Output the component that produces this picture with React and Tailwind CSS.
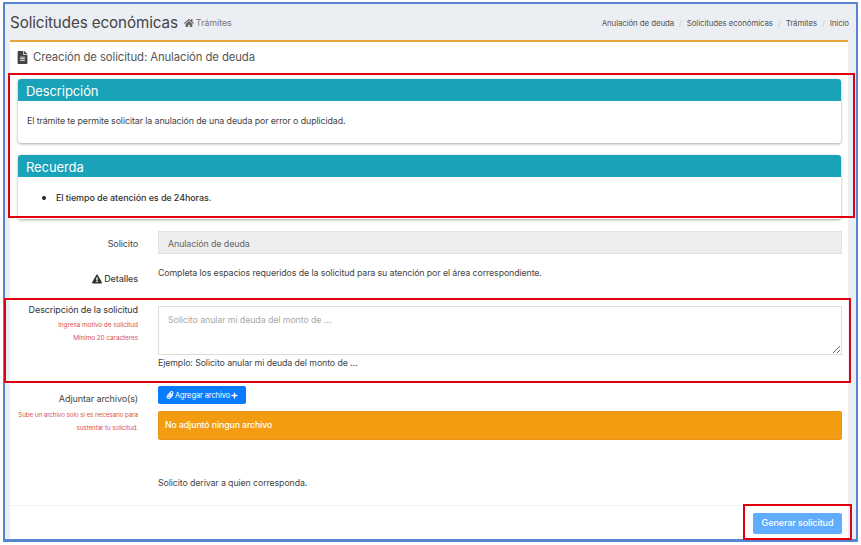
import { FaFileAlt, FaHome, FaExclamationTriangle, FaPaperclip, FaPlus } from "react-icons/fa";

const Panel = ({ title, className, children }) => (
  <div className={`rounded-[3px] bg-white shadow-[0_1px_3px_rgba(0,0,0,0.35)] ${className}`}>
    <div className="flex h-[22px] items-center rounded-t-[3px] bg-[#19a2b8] pl-2 pt-[3px] text-[13px] text-white">{title}</div>
    {children}
  </div>
);

export default function App() {
  return (
    <div className="relative h-[545px] w-[861px] bg-white pl-[3px] pt-[2px] font-['Inter',sans-serif] tracking-[-0.1px] text-[#444]">
      <div className="flex h-[540px] w-[855px] flex-col border-2 border-b-[3px] border-[#5585d2] bg-[#ebeef3]">
        {/* page title */}
        <div className="flex h-[36px] shrink-0 items-center justify-between pl-[5px] pr-[7px] pt-[3px]">
          <div className="flex items-baseline gap-[6px]">
            <span className="text-[15.2px] text-[#444]">Solicitudes económicas</span>
            <span className="flex items-center gap-[2px] text-[9px] text-[#777]">
              <FaHome className="h-[10px] w-[10px] text-[#666]" />
              Trámites
            </span>
          </div>
          <div className="flex gap-[5px] text-[7.9px] text-[#555]">
            <span>Anulación de deuda</span>
            <span className="text-[#ccc]">/</span>
            <span>Solicitudes económicas</span>
            <span className="text-[#ccc]">/</span>
            <span>Trámites</span>
            <span className="text-[#ccc]">/</span>
            <span>Inicio</span>
          </div>
        </div>

        {/* main card */}
        <div className="ml-[5px] flex w-[838px] flex-1 flex-col border-t-2 border-[#e5a33a] bg-white">
          <div className="flex h-[30px] shrink-0 items-center gap-[5px] pl-[7px] pt-[1px] text-[11.35px] text-[#555]">
            <FaFileAlt className="h-[13px] w-[11px] text-[#444]" />
            Creación de solicitud: Anulación de deuda
          </div>

          <div className="flex flex-col pl-2 pr-[7px] pt-[7px]">
            <Panel title="Descripción" className="h-[64px]">
              <p className="pl-[9px] pt-[13px] text-[8.85px] text-[#444]">
                El trámite te permite solicitar la anulación de una deuda por error o duplicidad.
              </p>
            </Panel>
            <Panel title="Recuerda" className="mt-3 h-[64px]">
              <div className="flex items-center pl-[24px] pt-[14px] text-[9px] font-medium text-[#333]">
                <span className="mr-[10px] h-[4px] w-[4px] rounded-full bg-[#222]" />
                El tiempo de atención es de 24horas.
              </div>
            </Panel>
          </div>

          <div className="mt-[12px] flex pr-[6px]">
            <div className="flex w-[128px] shrink-0 items-center justify-end pt-[3px] text-[9px] text-[#444]">Solicito</div>
            <div className="ml-[20px] flex h-[23px] flex-1 items-center border border-[#e2e2e2] bg-[#eeeeee] pl-[9px] pt-[3px] text-[8.9px] text-[#666]">
              Anulación de deuda
            </div>
          </div>

          <div className="mt-[12px] flex pr-[6px]">
            <div className="w-[128px] shrink-0 pt-[6px] text-right text-[9px] text-[#444]">
              <span className="inline-flex items-center gap-[2px] font-medium">
                <FaExclamationTriangle className="h-[10px] w-[10px] text-[#333]" />
                Detalles
              </span>
            </div>
            <div className="ml-[20px] text-[8.8px] text-[#444]">
              Completa los espacios requeridos de la solicitud para su atención por el área correspondiente.
            </div>
          </div>

          <div className="mt-[19px] flex pr-[6px]">
            <div className="-mt-[4px] w-[128px] shrink-0 pt-[1px] text-right">
              <div className="text-[9px] text-[#333]">Descripción de la solicitud</div>
              <div className="mt-[4px] text-[6.5px] text-[#d9534f]">Ingresa motivo de solicitud</div>
              <div className="mt-[3px] text-[6.5px] text-[#d9534f]">Mínimo 20 caracteres</div>
            </div>
            <div className="ml-[20px] flex-1">
              <textarea
                readOnly
                placeholder="Solicito anular mi deuda del monto de ..."
                className="block h-[49px] w-full border border-[#dcdcdc] bg-white px-[9px] py-[6px] text-[8.85px] placeholder:text-[#aaa]"
              />
              <div className="mt-[1px] text-[8.8px] text-[#444]">Ejemplo: Solicito anular mi deuda del monto de ...</div>
            </div>
          </div>

          <div className="mt-[17px] flex pr-[6px]">
            <div className="w-[128px] shrink-0 pt-[6px] text-right">
              <div className="text-[9px] text-[#444]">Adjuntar archivo(s)</div>
              <div className="mt-[3px] text-[6.3px] leading-[13px] text-[#d9534f]">
                Sube un archivo solo si es necesario para sustentar tu solicitud.
              </div>
            </div>
            <div className="ml-[20px] flex-1">
              <button className="flex h-[18px] w-[88px] items-center justify-center gap-[1px] rounded-[2px] bg-[#0a7bfa] text-[7.5px] text-white">
                <FaPaperclip className="h-[8px] w-[8px]" />
                Agregar archivo
                <FaPlus className="h-[7px] w-[7px]" />
              </button>
              <div className="mt-[7px] flex h-[29px] items-center rounded-[2px] border border-[#e8961a] bg-[#f39c12] pl-[6px] text-[8.75px] font-medium text-white">
                No adjuntó ningun archivo
              </div>
            </div>
          </div>

          <div className="ml-[148px] mt-[36px] text-[8.8px] text-[#444]">Solicito derivar a quien corresponda.</div>

          <div className="mt-[15px] flex flex-1 items-start justify-end border-t border-[#f2f2f2] pr-[6px] pt-[7px]">
            <button className="h-[21px] w-[89px] rounded-[2px] bg-[#60acff] text-[9px] font-medium text-white">
              Generar solicitud
            </button>
          </div>
        </div>
      </div>

      {/* red annotation boxes drawn over the screenshot */}
      <div className="pointer-events-none absolute left-[8px] top-[73px] h-[145px] w-[847px] border-2 border-[#e0000f]" />
      <div className="pointer-events-none absolute left-[4px] top-[298px] h-[85px] w-[847px] border-2 border-[#e0000f]" />
      <div className="pointer-events-none absolute left-[743px] top-[504px] h-[36px] w-[109px] border-2 border-[#e0000f]" />
    </div>
  );
}
